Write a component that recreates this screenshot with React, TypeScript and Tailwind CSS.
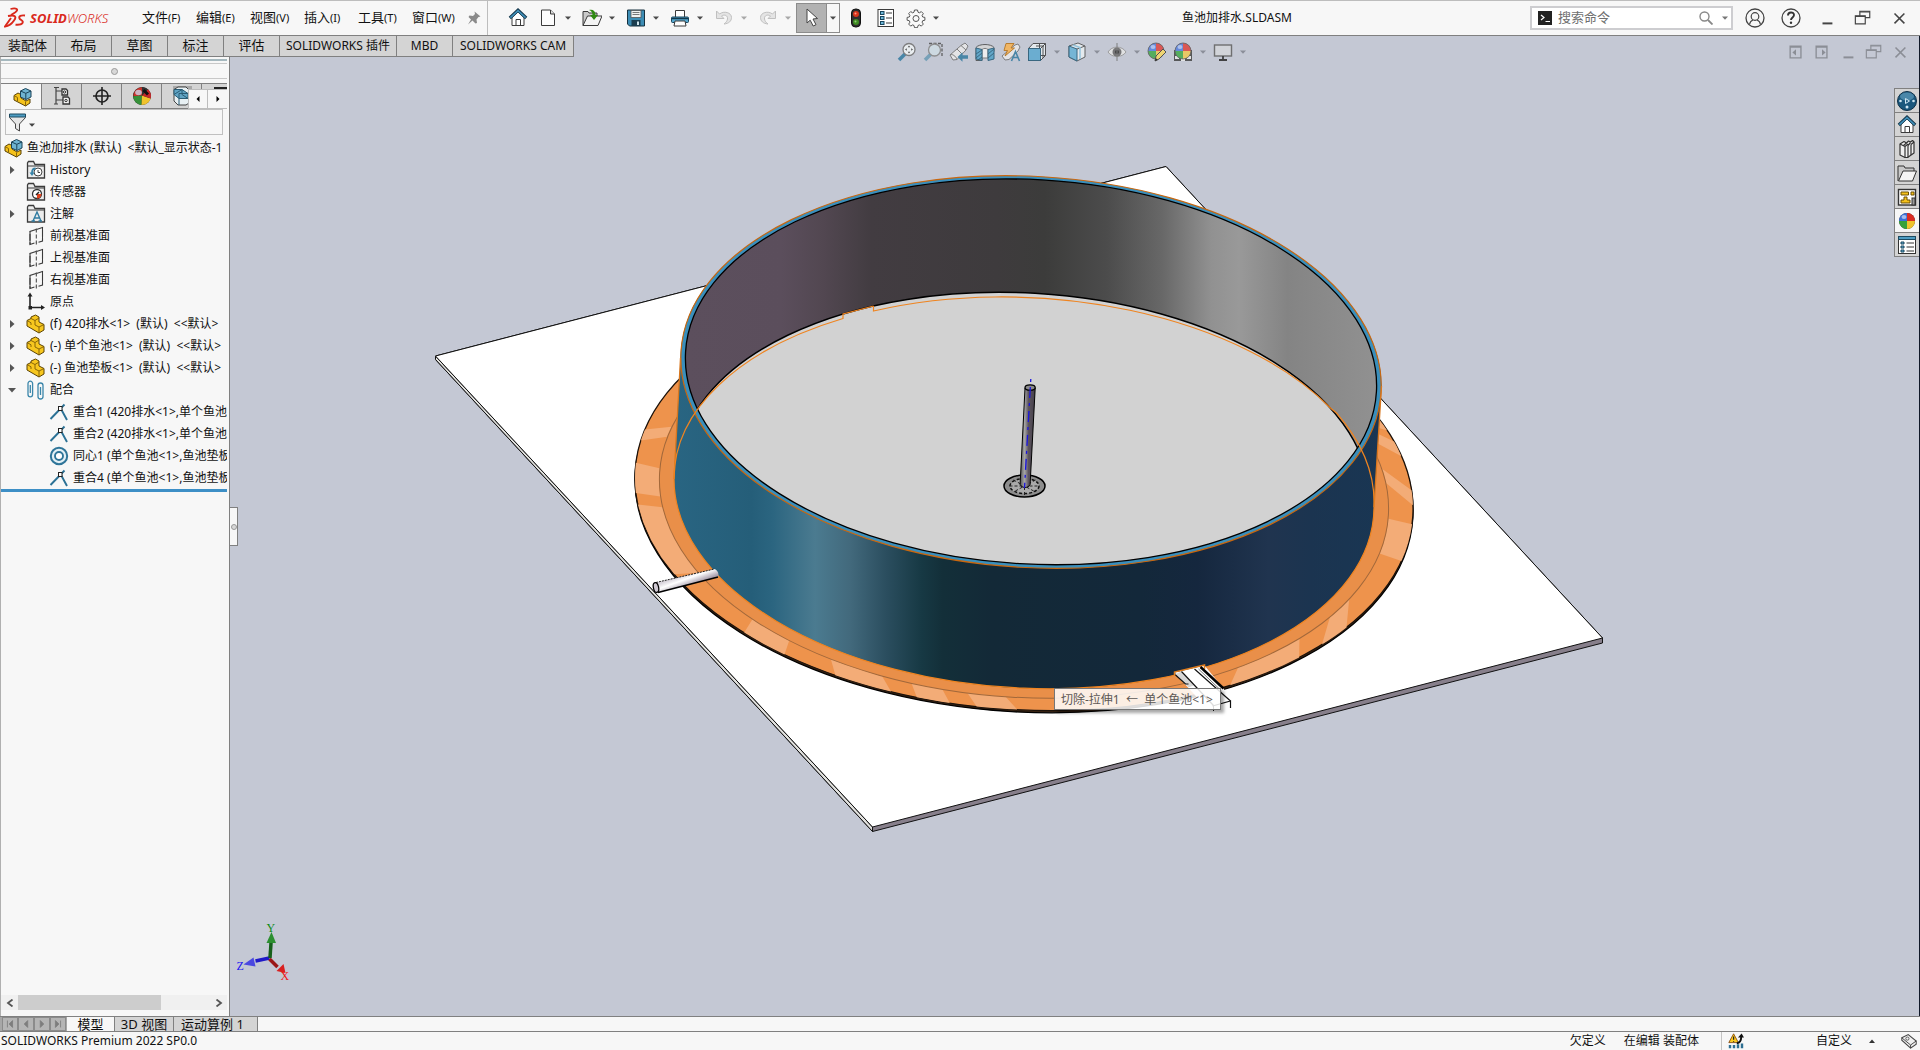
import type { ReactNode, SVGProps } from 'react';
import { clsx } from 'clsx';

/* ---------- small building blocks ---------- */

interface SvgProps {
  children: ReactNode;
  size?: number;
}

function Glyph({ children, size = 20 }: SvgProps) {
  return (
    <svg viewBox="0 0 20 20" width={size} height={size} fill="none" className="shrink-0" aria-hidden="true">
      {children}
    </svg>
  );
}

function Caret({ className = 'text-[#4a4a4a]' }: { className?: string }) {
  return (
    <svg viewBox="0 0 8 6" className={clsx('w-2 h-1.5 shrink-0', className)} aria-hidden="true">
      <path d="M1 1.500h6L4 4.800z" fill="currentColor" />
    </svg>
  );
}

/* ---------- icons ---------- */

const HomeIcon = () => (
  <Glyph>
    <path d="M4 9.500v8h12v-8L10 4z" fill="#fff" stroke="#3b3b3b" />
    <path d="M8 17.500v-6h4.500v6" stroke="#3b3b3b" />
    <path d="M1.800 10 10 2.200l8.200 7.800" stroke="#14374c" strokeWidth="3.200" />
    <path d="M2.400 9.700 10 2.600l7.600 7.100" stroke="#3f8fb8" strokeWidth="1.600" />
  </Glyph>
);

const NewIcon = () => (
  <Glyph>
    <path d="M3.500 2h9l4 4v11.500h-13z" fill="#fdfdfd" stroke="#3b3b3b" strokeLinejoin="round" />
    <path d="M12.500 2v4h4" fill="#ddd" stroke="#3b3b3b" />
  </Glyph>
);

const OpenIcon = () => (
  <Glyph>
    <path d="M1 17.500V3.500h5l1 1.500h8v3" fill="#c9c9c9" stroke="#3b3b3b" />
    <path d="M1 17.500 5.500 8H20l-4 9.500z" fill="#f4f4f4" stroke="#3b3b3b" strokeLinejoin="round" />
    <path d="M7 2c4-1 6.500 1 6.500 5H16l-4 5-4-5h2.500C10.500 4.500 9.500 3 7 2z" fill="#2f8a12" />
  </Glyph>
);

const SaveIcon = () => (
  <Glyph>
    <path d="M1.500 2h17v16h-15l-2-2z" fill="#3d8db5" stroke="#17313f" />
    <rect x="5" y="2.500" width="10" height="7" fill="#f1f1f1" stroke="#555" strokeWidth=".8" />
    <path d="M6.500 4.500h7M6.500 6.500h7" stroke="#777" />
    <rect x="5.500" y="12" width="9" height="6" fill="#1b3d4f" />
    <rect x="11" y="13.500" width="2" height="3.500" fill="#cfe3ec" />
  </Glyph>
);

const PrintIcon = () => (
  <Glyph>
    <path d="M5.500 9V2.500h9V9" fill="#fff" stroke="#3b3b3b" />
    <rect x="1.500" y="9" width="17" height="5.500" rx="1" fill="#56a8cf" stroke="#17445c" />
    <path d="M2 10.500h16" stroke="#12394d" strokeWidth="1.500" />
    <path d="M5 13h10l1 5H4z" fill="#fff" stroke="#3b3b3b" />
  </Glyph>
);

const UndoIcon = ({ flip = false }) => (
  <Glyph>
    <g transform={flip ? 'matrix(-1 0 0 1 20 0)' : undefined}>
      <path d="M2.500 3v7.500H10L7.500 8c3-2 6.500-.5 6 3-.3 2-1.500 3.500-3.500 5 5-.5 7.500-3 7.500-6.500C17.500 4.500 10 2.500 5.500 6z" fill="#e4e4e4" stroke="#c0c0c0" />
    </g>
  </Glyph>
);

const PointerIcon = () => (
  <Glyph>
    <path d="M5 1v14l3.200-2.800 3 5.800 2.800-1.300-3-5.700 4.500-.5z" fill="#fff" stroke="#444" />
  </Glyph>
);

const TrafficIcon = () => (
  <Glyph>
    <rect x="5.500" y="1" width="9" height="18" rx="4" fill="#2e2e2e" stroke="#111" />
    <circle cx="10" cy="6" r="3" fill="#d8341c" />
    <circle cx="10" cy="14" r="3" fill="#3f8c22" />
    <circle cx="9.500" cy="5.500" r="1" fill="#ff9d86" />
    <circle cx="9.500" cy="13.500" r="1" fill="#92cf76" />
  </Glyph>
);

const OptionsListIcon = () => (
  <Glyph>
    <rect x="2" y="1.500" width="15.500" height="17" fill="#fff" stroke="#3b3b3b" />
    {[4, 9, 14].map((y) => (
      <g key={y}>
        <rect x="4.500" y={y - 0.5} width="3.500" height="3" fill="#6db6d8" stroke="#17445c" />
        <path d={`M10 ${y + 1}h6`} stroke="#3b3b3b" />
      </g>
    ))}
  </Glyph>
);

const GearIcon = () => (
  <Glyph>
    <path
      d="M8.500 2h3l.5 2.200 1.400.6L15.300 3.600l2 2-1.200 1.900.6 1.500 2.200.4v2.800l-2.200.5-.6 1.500 1.200 1.900-2 2-1.900-1.200-1.400.6-.5 2.200h-3L8 17.500l-1.400-.6-1.900 1.200-2-2 1.200-1.900-.6-1.500-2.200-.5V9.400L3.300 9l.6-1.500-1.200-1.900 2-2 1.900 1.200L8 4.200z"
      fill="#fafafa"
      stroke="#555"
    />
    <circle cx="10" cy="10.500" r="3" stroke="#555" />
  </Glyph>
);

const AssemblyIcon = () => (
  <Glyph>
    <path d="M1 8.500 5 6l3 1.500V11l5 3 4-2v4l-4.500 3L1 13z" fill="#f5c21b" stroke="#5b4305" strokeLinejoin="round" />
    <path d="m1 8.500 3.500 2V14M12.500 14.500V19" stroke="#8a6708" />
    <path d="m7.500 4 5-2.500L18 4v6l-5 2.500L7.500 10z" fill="#6fb4d2" stroke="#1a4358" strokeLinejoin="round" />
    <path d="m7.500 4 5.300 2.300L18 4M12.800 6.300v6" stroke="#1a4358" />
  </Glyph>
);

const PartIcon = () => (
  <Glyph>
    <path d="M1 6.500 5 4.500V3l4.500-2L13 3v5l5 2.500V16l-5 3-12-7z" fill="#f7c71f" stroke="#5b4305" strokeLinejoin="round" />
    <path d="m5 4.500 4 2v4.500l4 2 5-2.500M13 13v6M9 6.500 13 4M1 6.500l4 2.300V11" stroke="#7d5c06" strokeWidth=".9" />
  </Glyph>
);

const FolderIcon = ({ children }: { children: ReactNode }) => (
  <Glyph>
    <path d="M1.500 18V3l1-1.500h5l1.500 3h9.500V18z" fill="#ececec" stroke="#3b3b3b" strokeWidth="1.300" />
    <path d="M2 6h16" stroke="#3b3b3b" />
    {children}
  </Glyph>
);

const HistoryIcon = () => (
  <FolderIcon>
    <circle cx="12" cy="12" r="4" fill="#fff" stroke="#444" />
    <path d="M12 10v2.500h2" stroke="#444" />
    <path d="M9.500 8.500C7 8.500 6 10.500 6 13" stroke="#3683a8" strokeWidth="1.800" />
    <path d="M3.500 12.500h5L6 16z" fill="#3683a8" />
  </FolderIcon>
);

const SensorIcon = () => (
  <FolderIcon>
    <circle cx="11" cy="12" r="4.500" fill="#fff" stroke="#333" strokeWidth="1.300" />
    <path d="M11 12h4.500A4.500 4.500 0 0 1 11 16.500z" fill="#e2431e" />
    <path d="m10 13 3-3" stroke="#222" strokeWidth="1.500" />
  </FolderIcon>
);

const NoteIcon = () => (
  <FolderIcon>
    <path d="m7 17 4-9 4 9M8.500 14h5M5.500 17H9M12.500 17H16" stroke="#2f7ba1" strokeWidth="1.400" />
  </FolderIcon>
);

const PlaneIcon = () => (
  <Glyph>
    <path d="M10 3.500 4 5.500v13l6-2M10.500 3.500l6-2V15L11 16.700" stroke="#3b3b3b" strokeWidth="1.100" strokeDasharray="7 1.500" />
    <path d="M4 5.500v13M16.500 1.500V15" stroke="#3b3b3b" />
    <path d="M10.300 2.500v16" stroke="#3b3b3b" strokeDasharray="4 2" />
  </Glyph>
);

const OriginIcon = () => (
  <Glyph>
    <path d="M4 3v12.500h12" stroke="#222" strokeWidth="1.600" />
    <path d="m1.500 4.500 2.500-4 2.500 4zM15 13l4 2.500-4 2.500z" fill="#222" />
    <rect x="2.500" y="14" width="3.500" height="3.500" fill="#222" />
  </Glyph>
);

const MatesIcon = () => (
  <Glyph>
    <path
      d="M2 5v9.500a2.300 2.300 0 0 0 4.600 0V3.500a2 2 0 0 0-4.600 0zM4.300 5v8M12 7v9.500a2.300 2.300 0 0 0 5 0V5.500a2.300 2.300 0 0 0-5 0zM14.500 7v8"
      stroke="#3b86aa"
      strokeWidth="1.300"
    />
  </Glyph>
);

const CoincidentIcon = () => (
  <Glyph>
    <path d="M1.500 17 15.500 2.500M11.500 6l6.500 12" stroke="#2b7195" strokeWidth="1.900" />
    <rect x="9.500" y="4.500" width="3.500" height="4" fill="#fff" stroke="#222" />
  </Glyph>
);

const ConcentricIcon = () => (
  <Glyph>
    <circle cx="10" cy="10" r="8.200" stroke="#2f7599" strokeWidth="2" fill="#e3f0f6" />
    <circle cx="10" cy="10" r="4" stroke="#2f7599" strokeWidth="1.900" fill="#fff" />
  </Glyph>
);

const BallIcon = () => (
  <Glyph>
    <circle cx="10" cy="10" r="8" fill="#333" />
    <path d="M10 10V2a8 8 0 0 0-8 8z" fill="#3b6fd8" />
    <path d="M10 10h8a8 8 0 0 0-8-8z" fill="#d92b23" />
    <path d="M10 10H2a8 8 0 0 0 8 8z" fill="#36a13a" />
    <path d="M10 10v8a8 8 0 0 0 8-8z" fill="#f0c32c" />
    <ellipse cx="7" cy="6" rx="2.500" ry="2" fill="#fff" opacity=".55" />
  </Glyph>
);

const AppearanceIcon = () => (
  <Glyph>
    <circle cx="10" cy="10" r="9" fill="#222" />
    <path d="M10 9.500V1.200a9 9 0 0 0-8.700 9z" fill="#c9322b" />
    <path d="m10 9.500-8.700.7C1.500 15 5 18.500 9.500 18.900z" fill="#36913a" />
    <path d="M10 9.500 9.500 18.900c4.500 0 8-2.600 9.200-6.400z" fill="#f0c32c" />
    <path d="m10 9.500 8.700 3c1-3.500-.2-7-2.700-9.200z" fill="#c4282a" />
    <path d="M10 1.200c2.200 0 4 .6 5.800 2L10 9.500z" fill="#333" />
    <path d="m11.500 4 4.500 4.500" stroke="#111" strokeWidth="3" />
    <ellipse cx="6.500" cy="6.500" rx="3.300" ry="2.800" fill="#cfe0f8" opacity=".75" />
  </Glyph>
);

const ConfigIcon = () => (
  <Glyph>
    <path d="M4 1v17M4 5h6M4 14h7" stroke="#444" strokeWidth="1.200" />
    <path d="M2 1.500h5M2 18h4" stroke="#444" />
    <path d="M10 3h4l1.500 1.500V9H10zM11 11h5l1.500 1.500V18H11z" fill="#f4f4f4" stroke="#333" strokeWidth="1.300" />
    <circle cx="12.500" cy="6" r="1.200" stroke="#333" />
    <circle cx="14" cy="14.500" r="1.200" stroke="#333" />
  </Glyph>
);

const DimXpertIcon = () => (
  <Glyph>
    <circle cx="10" cy="10" r="6" stroke="#222" strokeWidth="1.700" />
    <path d="M10 1v18M1 10h18" stroke="#222" strokeWidth="1.600" />
  </Glyph>
);

const CamIcon = () => (
  <Glyph>
    <path d="M1 1.500h19v5" stroke="#a8a8a8" strokeWidth="4" />
    <path d="M2 3.500 6 1h8l3 3v13l-3 2H6l-4-4z" fill="#e8f0f3" stroke="#444" />
    <path d="M2 3.500h8l6 4v5h-9l-5-4z" fill="#5fa3c3" stroke="#2a5c75" />
    <path d="m2 8.500 8-5v5l6 4M7 12.500V7.500h9M7 12.500V19" stroke="#2a5c75" />
  </Glyph>
);

const MagnifierFitIcon = () => (
  <Glyph>
    <path d="m2 18 6-6" stroke="#3c7fa3" strokeWidth="3.500" />
    <circle cx="12" cy="7.500" r="6" fill="#eef2f4" stroke="#777" strokeWidth="1.300" />
    <path d="m12 3.500 1.300 1.800h-2.600zM12 11.500l1.300-1.800h-2.600zM8 7.500l1.800-1.300v2.600zM16 7.500l-1.800-1.300v2.600z" fill="#444" />
  </Glyph>
);

const MagnifierAreaIcon = () => (
  <Glyph>
    <path d="M6 1.500h13V14" stroke="#555" strokeDasharray="3 1.500" strokeWidth="1.300" />
    <path d="m2 18 6-6" stroke="#6f9db5" strokeWidth="3.500" />
    <circle cx="11.500" cy="8" r="6" fill="#cfdbe3" stroke="#888" strokeWidth="1.300" />
  </Glyph>
);

const PreviousViewIcon = () => (
  <Glyph>
    <path d="M1 13 12 3.500 16 1l3 3-2 4-9 9.500-4 .5z" fill="#e8e8e8" stroke="#777" />
    <path d="m12 3.500 5 4.500M8 7l5 5M1 13c2-1.500 6 1 7 4.500" stroke="#777" />
    <path d="M12 15h7" stroke="#3c7fa3" strokeWidth="3.500" />
    <path d="m8.500 15 5-4.800v9.600z" fill="#3c7fa3" />
  </Glyph>
);

const SectionIcon = () => (
  <Glyph>
    <path d="M1 5.500c3-4 15-4 18 0v4l-6 1c-2-1.500-4-1.500-6 0v8H1z" fill="#d6d6d6" stroke="#555" />
    <path d="M7 7.500c2-1.500 4-1.500 6 0V16H7z" fill="#f1f1f1" stroke="#777" />
    <path d="M1 6l6 1.500v11L1 17zM19 6l-6 1.500v11l6-1.500z" fill="#58a4c8" stroke="#2b5d78" />
    <path d="m1 12 6-4M1 16l6-5M3 18l4-3M13 12l6-5M13 16l6-5" stroke="#2b5d78" />
  </Glyph>
);

const DynamicNoteIcon = () => (
  <Glyph>
    <path d="M1 14 14 3l3-1 2 3-2 4-9 8.500-4 .5z" fill="#e8e8e8" stroke="#777" />
    <path d="M5 1.500h8L10 6h3.500L4 14l2.500-5.500H3z" fill="#f5b55a" stroke="#b36d12" strokeWidth=".9" />
    <path d="m10.500 19 4-9.500 4 9.500M12 15.500h5" stroke="#3c7fa3" strokeWidth="1.600" />
  </Glyph>
);

const OrientationIcon = () => (
  <Glyph>
    <path d="M1.500 6.500 6 1.500h12.500v12l-5 5" fill="#e8edf0" stroke="#444" />
    <path d="M13.500 6.500 18.500 1.500M12.500 1.500v12h6M9 4h8M16 4v12" stroke="#444" />
    <rect x="1.500" y="6.500" width="12" height="12" fill="#62abd0" stroke="#2b5d78" />
  </Glyph>
);

const DisplayStyleIcon = () => (
  <Glyph>
    <path d="m2 4 9-3 7 3v11l-8 4-8-4z" fill="#e8edf0" stroke="#555" />
    <path d="m2 4 8 3v12l-8-4z" fill="#6db4d6" stroke="#2b5d78" />
    <path d="m10 7 8-3" stroke="#555" />
    <path d="m6 3 7 2.500V17" stroke="#8fc4de" strokeWidth="1.500" />
  </Glyph>
);

const EyeIcon = () => (
  <Glyph>
    <path d="M1 10c4-6.500 14-6.500 18 0-4 6-14 6-18 0z" fill="#e4e4e4" stroke="#999" />
    <circle cx="10" cy="10" r="4.500" fill="#6d6d6d" />
    <circle cx="10" cy="10" r="2" fill="#333" />
    <path d="M10 1v18" stroke="#777" />
  </Glyph>
);

const SoftBall = () => (
  <>
    <path d="M9 9V1a8 8 0 0 0-8 8z" fill="#5b83dd" />
    <path d="M9 9h8a8 8 0 0 0-8-8z" fill="#dd4b48" />
    <path d="M9 9H1a8 8 0 0 0 8 8z" fill="#4aab52" />
    <path d="M9 9v8a8 8 0 0 0 8-8z" fill="#ecc95b" />
    <circle cx="9" cy="9" r="8" stroke="#555" strokeWidth=".8" />
    <ellipse cx="6" cy="5" rx="2.500" ry="2" fill="#fff" opacity=".5" />
  </>
);

const EditAppearanceIcon = () => (
  <Glyph>
    <SoftBall />
    <path d="m8 19 1-5 7-7 3 3-7 7z" fill="#f3d668" stroke="#444" />
    <path d="m8 19 .8-3 2 2z" fill="#222" />
  </Glyph>
);

const SceneIcon = () => (
  <Glyph>
    <rect x="1" y="8" width="18" height="11" fill="#4c4c4c" />
    <path d="M2 14h4v3H2zM8 16h4v3H8zM14 14h4v3h-4z" fill="#e5e5e5" />
    <g transform="translate(1 0)">
      <SoftBall />
    </g>
  </Glyph>
);

const MonitorIcon = () => (
  <Glyph>
    <rect x="1.500" y="3" width="17" height="11" fill="#d4d6da" stroke="#666" strokeWidth="1.400" />
    <path d="M10 14v4M6 18h8" stroke="#333" strokeWidth="1.800" />
  </Glyph>
);

/* ---------- header ---------- */

const menus = [
  ['文件', 'F'],
  ['编辑', 'E'],
  ['视图', 'V'],
  ['插入', 'I'],
  ['工具', 'T'],
  ['窗口', 'W'],
];

function IconButton({ label, children, caret = false, dim = false }: { label: string; children: ReactNode; caret?: boolean; dim?: boolean }) {
  return (
    <button type="button" aria-label={label} className="flex items-center gap-1.5">
      {children}
      {caret && <Caret className={dim ? 'text-[#a8a8a8]' : 'text-[#4a4a4a]'} />}
    </button>
  );
}

function RestoreIcon() {
  return (
    <Glyph size={18}>
      <path d="M1.500 7.500h11v9h-11zM6.500 7.500v-5h11v7h-5" stroke="currentColor" strokeWidth="1.300" />
      <path d="M6.500 3.200h11M1.500 8.200h11" stroke="currentColor" strokeWidth="1.300" />
    </Glyph>
  );
}

function CloseIcon() {
  return (
    <Glyph size={18}>
      <path d="m5 5 11 11M16 5 5 16" stroke="currentColor" strokeWidth="1.700" />
    </Glyph>
  );
}

function MinimizeIcon() {
  return (
    <Glyph size={18}>
      <path d="M5 16h11" stroke="currentColor" strokeWidth="2.200" />
    </Glyph>
  );
}

function Header() {
  return (
    <header className="flex items-center h-9 shrink-0 border-t border-t-[#bdbdbd] border-b border-b-[#808080] bg-[#f7f7f7]">
      <div className="flex items-center w-[142px] pl-1 text-[#da291c]">
        <svg viewBox="0 0 22 22" className="w-[22px] h-[22px] shrink-0" fill="none" stroke="currentColor" aria-hidden="true">
          <path d="M6.500 2c6-1.500 9 .5 4.500 3.500L7 8" strokeWidth="1.800" />
          <path d="M4 9c7-1.500 9 .5 6 4.500-2 3-5 5.500-9 6L7 11" strokeWidth="1.900" />
          <path d="M21 8.500c-4-.5-6.500.5-5.500 3 1 1.800 4.500 2 3 4.500-1 1.500-3.500 2-7 1.700" strokeWidth="1.900" />
        </svg>
        <span className="ml-1 text-[13px] italic leading-4">
          <b>SOLID</b>
          <span className="font-light">WORKS</span>
        </span>
      </div>
      <nav className="flex items-center text-[13px]">
        {menus.map(([name, key]) => (
          <button key={key} type="button" className="w-[54px] text-left whitespace-nowrap">
            {name}
            <span className="text-[11px]">({key})</span>
          </button>
        ))}
        <svg viewBox="0 0 16 16" className="w-4 h-4 text-[#8a8a8a]" aria-hidden="true">
          <path d="m8.500 1.500 6 5-2 .5-2 2.500.5 3.500-1.500.5-3-3L2 14.500l3-5L2.500 7l1-1.500L7 6l2-2z" fill="currentColor" />
        </svg>
      </nav>
      <div className="flex items-center gap-2.5 h-full ml-[5px] pl-5 border-l border-[#bdbdbd]">
        <IconButton label="主页"><HomeIcon /></IconButton>
        <IconButton label="新建" caret><NewIcon /></IconButton>
        <IconButton label="打开" caret><OpenIcon /></IconButton>
        <IconButton label="保存" caret><SaveIcon /></IconButton>
        <IconButton label="打印" caret><PrintIcon /></IconButton>
        <IconButton label="撤消" caret dim><UndoIcon /></IconButton>
        <IconButton label="重做" caret dim><UndoIcon flip /></IconButton>
        <button type="button" aria-label="选择" className="flex h-[30px] -ml-1.5 -mr-1 border border-[#8c8c8c]">
          <span className="flex items-center justify-center w-[30px] h-full border-r border-[#8c8c8c] bg-[#b2b2b2]"><PointerIcon /></span>
          <span className="flex items-center justify-center w-3 h-full"><Caret /></span>
        </button>
        <IconButton label="重建模型"><TrafficIcon /></IconButton>
        <IconButton label="文件属性"><OptionsListIcon /></IconButton>
        <IconButton label="选项" caret><GearIcon /></IconButton>
      </div>
      <h1 className="flex-1 pl-1 text-center text-xs">鱼池加排水.SLDASM</h1>
      <div className="flex items-center shrink-0 pr-3 text-[#444]">
        <label className="flex items-center w-[203px] h-6 mr-3 px-1.5 border-2 border-[#cdcdd0] bg-white">
          <svg viewBox="0 0 14 14" className="w-3.5 h-3.5 shrink-0" aria-hidden="true">
            <path d="M0 0h14v14H0z" fill="#222" />
            <path d="m3 4 3 2.500-3 2.500M7.500 10.500H12" fill="none" stroke="#fff" strokeWidth="1.200" />
          </svg>
          <input type="text" aria-label="搜索命令" placeholder="搜索命令" className="flex-1 min-w-0 ml-1.5 text-[13px] outline-none placeholder:text-[#6f6f6f]" />
          <svg viewBox="0 0 14 14" className="w-3.5 h-3.5 mr-2 shrink-0 text-[#888]" fill="none" stroke="currentColor" strokeWidth="1.400" aria-hidden="true">
            <circle cx="5.500" cy="5.500" r="4.500" />
            <path d="m9 9 4.500 4.500" strokeWidth="1.800" />
          </svg>
          <Caret className="-mr-1 text-[#777]" />
        </label>
        <button type="button" aria-label="登录">
          <Glyph>
            <circle cx="10" cy="10" r="9" stroke="#444" strokeWidth="1.300" />
            <circle cx="10" cy="8.500" r="3.800" stroke="#444" strokeWidth="1.200" />
            <path d="M4.500 16.500c.5-3 2-4 3.500-4.500M15.500 16.500c-.5-3-2-4-3.500-4.500" stroke="#444" strokeWidth="1.200" />
          </Glyph>
        </button>
        <button type="button" aria-label="帮助" className="ml-4">
          <Glyph>
            <circle cx="10" cy="10" r="9" stroke="#444" strokeWidth="1.300" />
            <path d="M7 7.500c0-4 6-4 6-.5 0 2.500-3 2.300-3 5" stroke="#333" strokeWidth="1.900" />
            <circle cx="10" cy="14.800" r="1.200" fill="#333" />
          </Glyph>
        </button>
        <button type="button" aria-label="最小化" className="ml-[17px]"><MinimizeIcon /></button>
        <button type="button" aria-label="还原" className="ml-[18px]"><RestoreIcon /></button>
        <button type="button" aria-label="关闭" className="ml-[18px]"><CloseIcon /></button>
      </div>
    </header>
  );
}

const commandTabs = [
  ['装配体', 'w-14 text-[13px]'],
  ['布局', 'w-14 text-[13px]'],
  ['草图', 'w-14 text-[13px]'],
  ['标注', 'w-14 text-[13px]'],
  ['评估', 'w-14 text-[13px]'],
  ['SOLIDWORKS 插件', 'w-[117px] text-xs'],
  ['MBD', 'w-14 text-xs'],
  ['SOLIDWORKS CAM', 'w-[121px] text-xs'],
];

function CommandTabs() {
  return (
    <div className="flex h-[21px] shrink-0">
      {commandTabs.map(([name, classes]) => (
        <button
          key={name}
          type="button"
          className={clsx('flex items-center justify-center border-r border-b border-[#808080] bg-[#d4d4d4] whitespace-nowrap', classes)}
        >
          {name}
        </button>
      ))}
    </div>
  );
}

/* ---------- feature manager ---------- */

interface TreeItem {
  icon: ReactNode;
  text: string;
  arrow?: 'right' | 'down';
  nested?: boolean;
}

const tree: TreeItem[] = [
  { icon: <HistoryIcon />, text: 'History', arrow: 'right' },
  { icon: <SensorIcon />, text: '传感器' },
  { icon: <NoteIcon />, text: '注解', arrow: 'right' },
  { icon: <PlaneIcon />, text: '前视基准面' },
  { icon: <PlaneIcon />, text: '上视基准面' },
  { icon: <PlaneIcon />, text: '右视基准面' },
  { icon: <OriginIcon />, text: '原点' },
  { icon: <PartIcon />, text: '(f) 420排水<1>  (默认)  <<默认>', arrow: 'right' },
  { icon: <PartIcon />, text: '(-) 单个鱼池<1>  (默认)  <<默认>', arrow: 'right' },
  { icon: <PartIcon />, text: '(-) 鱼池垫板<1>  (默认)  <<默认>', arrow: 'right' },
  { icon: <MatesIcon />, text: '配合', arrow: 'down' },
  { icon: <CoincidentIcon />, text: '重合1 (420排水<1>,单个鱼池', nested: true },
  { icon: <CoincidentIcon />, text: '重合2 (420排水<1>,单个鱼池', nested: true },
  { icon: <ConcentricIcon />, text: '同心1 (单个鱼池<1>,鱼池垫板', nested: true },
  { icon: <CoincidentIcon />, text: '重合4 (单个鱼池<1>,鱼池垫板', nested: true },
];

function TreeArrow({ dir }: { dir?: 'right' | 'down' }) {
  return (
    <svg viewBox="0 0 8 8" className="w-2 h-2 shrink-0" aria-hidden="true">
      {dir === 'right' && <path d="M2 0v8l4.500-4z" fill="#555" />}
      {dir === 'down' && <path d="M0 2h8L4 6.500z" fill="#555" />}
    </svg>
  );
}

function ManagerTab({ label, children, active = false }: { label: string; children: ReactNode; active?: boolean }) {
  return (
    <button
      type="button"
      aria-label={label}
      className={clsx(
        'flex items-center justify-center h-full shrink-0 border-r border-[#808080]',
        active ? 'w-[41px] pl-1' : 'w-10 border-b bg-[#d4d4d4]',
      )}
    >
      {children}
    </button>
  );
}

function FeatureManager() {
  return (
    <aside className="flex flex-col w-[230px] shrink-0 border-l border-r border-l-[#b0b0b0] border-r-[#808080] bg-[#f7f7f7]">
      <div className="flex flex-col flex-1 mr-0.5 overflow-hidden">
        <div className="h-0.5 mt-0.5 shrink-0 bg-[#a5b8be]" />
        <div className="flex items-center justify-center h-4 mt-0.5 shrink-0 border-t border-b border-[#c8c8c8]">
          <span className="w-[7px] h-[7px] rounded-full border border-[#999] bg-[#d8d8d8]" />
        </div>
        <div className="relative flex h-[26px] mt-1 shrink-0 border-t border-[#808080]">
          <ManagerTab label="FeatureManager" active><AssemblyIcon /></ManagerTab>
          <ManagerTab label="ConfigurationManager"><ConfigIcon /></ManagerTab>
          <ManagerTab label="DimXpertManager"><DimXpertIcon /></ManagerTab>
          <ManagerTab label="DisplayManager"><AppearanceIcon /></ManagerTab>
          <ManagerTab label="CAM"><CamIcon /></ManagerTab>
          <ManagerTab label="CAM Tools"><span className="self-start w-full h-0.5 mt-[3px] ml-3 bg-[#222]" /></ManagerTab>
          <div className="absolute right-0 bottom-0 flex h-5 border border-r-0 border-[#bdbdbd] bg-[#f7f7f7]">
            <button type="button" aria-label="向左" className="w-[19px] border-r border-[#bdbdbd]">
              <svg viewBox="0 0 8 8" className="w-2 h-2 mx-auto" aria-hidden="true"><path d="M5.500 1v6L2.500 4z" /></svg>
            </button>
            <button type="button" aria-label="向右" className="w-[19px]">
              <svg viewBox="0 0 8 8" className="w-2 h-2 mx-auto" aria-hidden="true"><path d="M2.500 1v6l3-3z" /></svg>
            </button>
          </div>
        </div>
        <button type="button" aria-label="过滤器" className="flex items-center h-[26px] ml-1 mr-1 mb-0.5 pl-0.5 shrink-0 border border-[#c0c0c0]">
          <Glyph>
            <path d="M1.500 3h16v2.500L11.500 12v7l-4-2.500V12L1.500 5.500z" fill="#e6e6e6" stroke="#444" />
            <path d="M1.500 2h16v3h-16z" fill="#4d9cc2" stroke="#1c4a60" />
          </Glyph>
          <Caret className="mt-1.5 text-[#444]" />
        </button>
        <ul className="text-xs whitespace-pre">
          <li className="flex items-center h-[22px] pl-[3px] gap-[3px]">
            <AssemblyIcon />
            <span>{'鱼池加排水 (默认)  <默认_显示状态-1'}</span>
          </li>
          {tree.map(({ icon, text, arrow, nested }) => (
            <li key={text} className={clsx('flex items-center h-[22px] gap-1', nested ? 'pl-9' : 'pl-[7px]')}>
              <TreeArrow dir={arrow} />
              <span className={nested ? '' : 'ml-1.5'}>{icon}</span>
              <span>{text}</span>
            </li>
          ))}
        </ul>
        <div className="h-[3px] shrink-0 bg-[#3d8fc6]" />
        <div className="flex items-center h-[15px] mt-auto mb-1.5 shrink-0 bg-[#f0f0f0] text-[#555]">
          <button type="button" aria-label="向左滚动" className="flex justify-center w-[17px]">
            <svg viewBox="0 0 8 8" className="w-2 h-2" fill="none" stroke="currentColor" strokeWidth="1.800" aria-hidden="true"><path d="M6.500.5 2 4l4.500 3.500" /></svg>
          </button>
          <div className="w-[143px] h-full bg-[#cdcdcd]" />
          <button type="button" aria-label="向右滚动" className="flex justify-center w-[17px] ml-auto">
            <svg viewBox="0 0 8 8" className="w-2 h-2" fill="none" stroke="currentColor" strokeWidth="1.800" aria-hidden="true"><path d="M1.500.5 6 4 1.500 7.500" /></svg>
          </button>
        </div>
      </div>
    </aside>
  );
}

/* ---------- model ---------- */

const TILT = 3.3;

function Oval({ cx, cy, rx, ry, ...rest }: { cx: number; cy: number; rx: number; ry: number } & SVGProps<SVGEllipseElement>) {
  return <ellipse cx={cx} cy={cy} rx={rx} ry={ry} transform={`rotate(${TILT} ${cx} ${cy})`} {...rest} />;
}

// point on one of the pad's rings, angle in degrees clockwise from the right
function ringPoint(rx: number, ry: number, deg: number) {
  const a = (deg * Math.PI) / 180;
  return [1023.5 + rx * Math.cos(a), 493.5 + ry * Math.sin(a + 0.072)];
}

// lighter facets on the orange pad
const facets = [
  [190, 193, 2], [176, 184, -1], [154, 173, -1], [128, 136, 2], [110, 119, 3], [101, 106, 2],
  [91, 97, 2], [45, 58, -4], [34, 40, -7], [4, 14, -1], [-5, -1, -6], [-18, -14, -6], [-24, -21, -4],
];

function facetPath([from, to, skew]: number[]) {
  const pts: number[][] = [];
  for (let i = 0; i <= 4; i++) pts.push(ringPoint(389, 217, from + ((to - from) * i) / 4));
  for (let i = 4; i >= 0; i--) pts.push(ringPoint(365, 204, from + skew + ((to - from) * i) / 4));
  return `M${pts.map((p) => p.map((n) => n.toFixed(1)).join(' ')).join('L')}Z`;
}

const outerStops = [
  [0, '#296582'], [0.11, '#255e79'], [0.14, '#2b6580'], [0.2, '#4b7b90'], [0.25, '#42697c'],
  [0.3, '#2b4e5f'], [0.35, '#173944'], [0.38, '#132f39'], [0.45, '#132937'], [0.66, '#13283a'],
  [0.74, '#15273e'], [0.84, '#20344f'], [0.9, '#1b3450'], [1, '#193653'],
] as const;

const innerStops = [
  [0, '#5c4f5d'], [0.14, '#5b4e5c'], [0.2, '#524751'], [0.27, '#423c41'], [0.45, '#3e3b3d'],
  [0.52, '#3c3c3b'], [0.61, '#4c4c4c'], [0.69, '#686868'], [0.76, '#919191'], [0.8, '#999'],
  [0.87, '#848484'], [1, '#919191'],
] as const;

function Model() {
  return (
    <svg viewBox="230 57 1688 959" className="block w-full h-full" aria-label="鱼池加排水">
      <defs>
        <linearGradient id="outer" gradientUnits="userSpaceOnUse" x1="673" x2="1381" y1="0" y2="0">
          {outerStops.map(([o, c]) => <stop key={o} offset={o} stopColor={c} />)}
        </linearGradient>
        <linearGradient id="inner" gradientUnits="userSpaceOnUse" x1="684" x2="1377" y1="0" y2="0">
          {innerStops.map(([o, c]) => <stop key={o} offset={o} stopColor={c} />)}
        </linearGradient>
        <linearGradient id="pipe" x1="0" x2="1" y1="0" y2="0">
          <stop offset="0" stopColor="#555" />
          <stop offset=".3" stopColor="#a6a6a6" />
          <stop offset=".55" stopColor="#5c545e" />
          <stop offset="1" stopColor="#45404a" />
        </linearGradient>
        <linearGradient id="spout" gradientUnits="userSpaceOnUse" x1="683" y1="575" x2="687" y2="586">
          <stop offset="0" stopColor="#d9d4dc" />
          <stop offset=".4" stopColor="#fff" />
          <stop offset="1" stopColor="#aaa0ae" />
        </linearGradient>
        <clipPath id="mouth"><Oval cx={1030.5} cy={371.8} rx={346} ry={192.2} /></clipPath>
      </defs>

      {/* base plate */}
      <path d="M435 356 1165.500 166.500 1602 638v5L872 831.500 435 359.500z" fill="#877f8b" stroke="#111" strokeLinejoin="round" />
      <path d="M435 356v3.500L872 831.500V827z" fill="#e1e1de" stroke="#111" />
      <path d="M435 356 1165.500 166.500 1602 638 872 827z" fill="#fff" stroke="#111" />

      {/* pad */}
      <Oval cx={1023.5} cy={495.5} rx={389.5} ry={216.5} fill="#3a2413" stroke="#000" strokeWidth="1.300" />
      <Oval cx={1023.5} cy={493.3} rx={389.5} ry={216.5} fill="#ee934c" stroke="#1c120a" strokeWidth="1.300" />
      {facets.map((f) => <path key={f[0]} d={facetPath(f)} fill="#f3ac77" />)}
      <Oval cx={1023.5} cy={494} rx={365} ry={203.5} fill="#e98f49" stroke="#a1683b" />

      {/* tank */}
      <path d="M680 358 673.500 479A350.400 195 3.300 0 0 1373.500 507L1381 386A350.900 195.300 3.300 0 0 680 358z" fill="url(#outer)" />
      <Oval cx={1030.5} cy={372} rx={350.6} ry={195.6} fill="#3a8fbc" stroke="#c9670f" strokeWidth="1.200" />
      <g clipPath="url(#mouth)">
        <rect x="680" y="170" width="702" height="400" fill="url(#inner)" />
        <Oval cx={1023.5} cy={484.5} rx={345.8} ry={191.5} fill="#d2d2d2" stroke="#000" strokeWidth="1.500" />
      </g>
      <Oval cx={1030.5} cy={371.8} rx={346} ry={192.2} fill="none" stroke="#000" strokeWidth="1.300" />
      <path d="M680 358 673.500 479M1381 386 1373.500 507" stroke="#d9771e" strokeWidth="1.300" />
      <path
        d="M873 306v5A350.400 195 3.300 0 1 1330 408L1336 413A350.400 195 3.300 0 1 1373.500 507A350.400 195 3.300 0 1 673.500 479A350.400 195 3.300 0 1 842.500 318.500V314L873 306"
        fill="none"
        stroke="#ef8420"
        strokeWidth="1.200"
      />

      {/* drain with stand pipe */}
      <ellipse cx="1024" cy="486" rx="20.500" ry="11" fill="#8d8d8d" stroke="#000" strokeWidth="1.500" />
      <ellipse cx="1024" cy="486" rx="14.500" ry="7.500" fill="#aaa" stroke="#111" strokeWidth="1.500" strokeDasharray="3 2" />
      <path d="m1013 480 22 12M1035 480l-22 12M1009 486h30M1024 477v18" stroke="#222" strokeDasharray="3 2" />
      <path d="M1024.500 388 1019.600 484.500c2 4 8 4 10 0L1034.700 388z" fill="url(#pipe)" stroke="#000" />
      <ellipse cx="1029.600" cy="387.500" rx="5.100" ry="2.700" fill="#8a8a8a" stroke="#000" strokeWidth="1.300" />
      <path d="M1030.300 379 1024 488" stroke="#1a14e0" strokeWidth="1.300" strokeDasharray="3 5 11 5" />

      {/* side pipe */}
      <path d="M655.500 582.500 714 569c3 1 5 5 3.500 8l-60 15.500z" fill="url(#spout)" />
      <path d="M655.500 582.500 714 569" stroke="#222" strokeDasharray="2 1" />
      <path d="m657.500 592.500 60-15.500" stroke="#000" strokeWidth="1.500" />
      <ellipse cx="655.500" cy="587.500" rx="2.600" ry="5" fill="#cfc8d2" stroke="#000" strokeWidth="1.300" transform="rotate(-12 655.500 587.500)" />

      {/* outlet channel */}
      <path d="m1174 672.500 30-7 19 23 8 14-19 6-10-5z" fill="#fff" />
      <path d="m1175 674 6-2.500 12 14-5 2z" fill="#d6d6d6" />
      <path d="m1174 675v-3l30-7v4" fill="none" stroke="#e07c1d" strokeWidth="1.500" />
      <path d="m1175 675 10 9h3M1181 671.500l32 34M1194 669l36 32M1212 706l18-5v7" fill="none" stroke="#111" strokeWidth="1.200" />
      <path d="m1200 667 23 21.500" stroke="#000" strokeWidth="2.500" />
      <path d="m1198 669 23 22" stroke="#777" />
      <path d="M1213 706v5" stroke="#111" />

      {/* triad */}
      <g className="font-['Liberation_Serif',serif] text-[12px]">
        <path d="m269 958-14 3" stroke="#2019c8" strokeWidth="3.500" />
        <path d="m243 964.500 10-7 2 9z" fill="#4a48e0" />
        <path d="m269 959 8 8" stroke="#9a1717" strokeWidth="3.500" />
        <path d="m285 973-2-9-7 7z" fill="#d92020" />
        <path d="m269.500 958 1-15" stroke="#16601a" strokeWidth="3.500" />
        <path d="m271 932-5 11h9.500z" fill="#2c8f31" />
        <text x="266" y="932" fill="#0a8a12">Y</text>
        <text x="236" y="970" fill="#1c14f0">Z</text>
        <text x="280" y="980" fill="#f01414">X</text>
      </g>
    </svg>
  );
}

/* ---------- viewport ---------- */

function HeadsUpToolbar() {
  const dimCaret = <Caret className="text-[#858993]" />;
  return (
    <div className="flex items-center gap-1.5 opacity-90">
      <button type="button" aria-label="整屏显示全图"><MagnifierFitIcon /></button>
      <button type="button" aria-label="局部放大"><MagnifierAreaIcon /></button>
      <button type="button" aria-label="上一视图"><PreviousViewIcon /></button>
      <button type="button" aria-label="剖面视图"><SectionIcon /></button>
      <button type="button" aria-label="动态注解视图"><DynamicNoteIcon /></button>
      <button type="button" aria-label="视图定向" className="flex items-center gap-1.5"><OrientationIcon />{dimCaret}</button>
      <button type="button" aria-label="显示样式" className="flex items-center gap-1.5"><DisplayStyleIcon />{dimCaret}</button>
      <button type="button" aria-label="隐藏/显示项目" className="flex items-center gap-1.5"><EyeIcon />{dimCaret}</button>
      <button type="button" aria-label="编辑外观"><EditAppearanceIcon /></button>
      <button type="button" aria-label="应用布景" className="flex items-center gap-1.5"><SceneIcon />{dimCaret}</button>
      <button type="button" aria-label="视图设定" className="flex items-center gap-1.5"><MonitorIcon />{dimCaret}</button>
    </div>
  );
}

function DocumentControls() {
  return (
    <div className="flex items-center gap-2 text-[#8b8e96]">
      <button type="button" aria-label="折叠左侧">
        <Glyph size={18}><path d="M3.500 3.500h12v13h-12zM3.500 4.500h12" stroke="currentColor" strokeWidth="1.500" /><path d="M10 7v7l-4-3.500z" fill="currentColor" /></Glyph>
      </button>
      <button type="button" aria-label="折叠右侧">
        <Glyph size={18}><path d="M3.500 3.500h12v13h-12zM3.500 4.500h12" stroke="currentColor" strokeWidth="1.500" /><path d="M10 7v7l4-3.500z" fill="currentColor" /></Glyph>
      </button>
      <button type="button" aria-label="最小化文档"><MinimizeIcon /></button>
      <button type="button" aria-label="还原文档"><RestoreIcon /></button>
      <button type="button" aria-label="关闭文档"><CloseIcon /></button>
    </div>
  );
}

const taskPane = [
  {
    label: '3DEXPERIENCE',
    icon: (
      <Glyph>
        <circle cx="10" cy="10" r="9.500" fill="#1b587d" stroke="#0e3048" />
        <ellipse cx="10" cy="5.500" rx="7" ry="4" fill="#6ba6c7" opacity=".6" />
        <path d="m8.500 7.500 4 2.500-4 2.500z" fill="none" stroke="#cfe6f2" />
        <circle cx="3.500" cy="10" r="1.300" fill="#cfe6f2" />
        <circle cx="16.500" cy="10" r="1.300" fill="#cfe6f2" />
        <circle cx="10" cy="16" r="1.500" fill="#cfe6f2" />
      </Glyph>
    ),
  },
  { label: 'SOLIDWORKS 资源', icon: <HomeIcon /> },
  {
    label: '设计库',
    icon: (
      <Glyph>
        <path d="m3 5 4-2.500L9.500 4l2-2 2 1 2-1.500L17 3v11l-6.500 4.500H8L3 16z" fill="#efefef" stroke="#333" strokeWidth="1.200" strokeLinejoin="round" />
        <path d="m3 5 5 2.500v11M8 7.500 11 5M11 6.500v12M11 6.500l2.500-3M14 5.500V16M14 5.500 17 3M9.500 4l-3 2.500" stroke="#333" strokeWidth="1.200" />
      </Glyph>
    ),
  },
  {
    label: '文件探索器',
    icon: (
      <Glyph>
        <path d="M1 18V3h6l1 2h9v3" fill="#c9c9c9" stroke="#333" />
        <path d="M1.500 18 6 8h13.500l-4 10z" fill="#f4f4f4" stroke="#333" strokeLinejoin="round" />
      </Glyph>
    ),
  },
  {
    label: '视图调色板',
    icon: (
      <Glyph>
        <rect x="1.500" y="2.500" width="17" height="15.500" fill="#fff" stroke="#333" strokeWidth="1.400" />
        <path d="M4 5h7.500v3H4zM14 5h3v3h-3zM7 10h3v3h3v3H4v-3h3z" fill="#f5c21b" stroke="#6b4e05" />
        <rect x="15" y="11" width="3" height="7" fill="#999" stroke="#333" />
      </Glyph>
    ),
  },
  { label: '外观、布景和贴图', icon: <BallIcon />, active: true },
  {
    label: '自定义属性',
    icon: (
      <Glyph>
        <rect x="1.500" y="1.500" width="17" height="17" fill="#fff" stroke="#333" />
        <path d="M1.500 1.500h17v3h-17z" fill="#4d9cc2" stroke="#1c4a60" />
        <path d="M4 7h3v2H4zM4 11h3v2H4zM4 15h3v2H4z" fill="#6db6d8" stroke="#17445c" />
        <path d="M9.500 8H17M9.500 12H17M9.500 16H17" stroke="#333" />
      </Glyph>
    ),
  },
];

function Viewport() {
  return (
    <main className="relative flex-1 min-w-0 bg-[#c4c8d4]">
      <Model />
      {/* panel splitter */}
      <button type="button" aria-label="折叠面板" className="absolute top-[450px] left-0 flex items-center justify-center w-2 h-[39px] border border-l-0 border-[#808080] bg-[#f7f7f7]">
        <span className="w-1.5 h-1.5 rounded-full border border-[#999] bg-[#d8d8d8]" />
      </button>
      <div role="tooltip" className="absolute top-[631px] left-[824px] w-[167px] h-[22px] pl-1.5 border border-[#767676] bg-white/85 text-xs leading-[22px] whitespace-pre text-[#5d5855] shadow-[3px_3px_3px_rgba(0,0,0,0.35)]">
        {'切除-拉伸1  ←  单个鱼池<1>'}
      </div>
      <div className="absolute top-[31px] right-0 flex flex-col border-t border-l border-[#808080]">
        {taskPane.map(({ label, icon, active }) => (
          <button
            key={label}
            type="button"
            aria-label={label}
            className={clsx('flex items-center justify-center w-6 h-6 border-b border-[#808080]', active ? 'bg-[#f7f7f7]' : 'bg-[#d4d4d4]')}
          >
            {icon}
          </button>
        ))}
      </div>
    </main>
  );
}

/* ---------- footer ---------- */

function MotionTabs() {
  return (
    <div className="flex h-4 shrink-0 border-t border-b border-[#808080] bg-[#f7f7f7] text-[13px] leading-[13px]">
      <div className="flex w-[67px] pl-0.5 bg-[#a7a7a7] text-[#7d7d7d]">
        {['M4 3v8M10 3 6 7l4 4z', 'M9 3 5 7l4 4z', 'M5 3l4 4-4 4z', 'M10 3v8M4 3l4 4-4 4z'].map((d, i) => (
          <button key={d} type="button" aria-label={`工作表 ${i + 1}`} className="w-4 border border-[#8b8b8b] bg-[#b5b5b5]">
            <svg viewBox="0 0 14 14" className="w-3.5 h-3" fill="currentColor" stroke="currentColor" aria-hidden="true"><path d={d} /></svg>
          </button>
        ))}
      </div>
      <button type="button" className="flex items-center justify-center w-12 border-r border-[#808080]">模型</button>
      <button type="button" className="flex items-center justify-center w-[59px] border-r border-[#808080] bg-[#d4d4d4]">3D 视图</button>
      <button type="button" className="flex items-center w-[84px] pl-[7px] border-r border-[#808080] bg-[#d4d4d4] whitespace-nowrap">运动算例 1</button>
    </div>
  );
}

function StatusBar() {
  return (
    <footer className="flex items-center h-[18px] shrink-0 pl-px bg-[#f7f7f7] text-xs leading-[18px]">
      <span className="flex-1">SOLIDWORKS Premium 2022 SP0.0</span>
      <span>欠定义</span>
      <span className="ml-[18px]">在编辑 装配体</span>
      <span className="h-full ml-[22px] mr-1.5 border-l border-[#c4c4c4]" />
      <Glyph size={16}>
        <path d="M7 1 13 12H1z" fill="#fbc91c" stroke="#7a3c06" />
        <path d="M7 4.500v4M7 10v1" stroke="#222" strokeWidth="1.500" />
        <path d="M11 13c4-1 5.500-4 5.500-8" stroke="#111" strokeWidth="2.400" />
        <path d="m12.500 5.500 4.500-5 3 5z" fill="#111" />
        <path d="M1 15h3v4H1zM6 15h3v4H6zM11 14h3v5h-3zM16 13h3v6h-3z" fill="#2e6f92" />
      </Glyph>
      <button type="button" className="flex items-center ml-[72px]">
        自定义
        <svg viewBox="0 0 8 6" className="w-2 h-1.5 ml-4" aria-hidden="true"><path d="M1 5h6L4 1.500z" fill="#333" /></svg>
      </button>
      <button type="button" aria-label="标签" className="ml-[25px] mr-[3px]">
        <Glyph size={16}>
          <path d="m1 6 8-4 10 8v4l-7 5L1 9z" fill="#f0f0f0" stroke="#444" strokeWidth="1.300" />
          <path d="m1 6 11 9 7-5M12 15v4" stroke="#444" strokeWidth="1.200" />
          <circle cx="8" cy="7" r="2" stroke="#444" />
        </Glyph>
      </button>
    </footer>
  );
}

export default function App() {
  return (
    <div className="flex flex-col h-screen overflow-hidden bg-[#c4c8d4] font-['Noto_Sans','Noto_Sans_CJK_SC',sans-serif] text-[#111]">
      <Header />
      <div className="relative flex flex-col flex-1 min-h-0 border-r border-[#101828]">
        <CommandTabs />
        <div className="flex flex-1 min-h-0">
          <FeatureManager />
          <Viewport />
        </div>
        {/* view controls float over the graphics area */}
        <div className="absolute top-1.5 left-[897px]"><HeadsUpToolbar /></div>
        <div className="absolute top-[7px] right-[10px]"><DocumentControls /></div>
      </div>
      <MotionTabs />
      <StatusBar />
    </div>
  );
}
